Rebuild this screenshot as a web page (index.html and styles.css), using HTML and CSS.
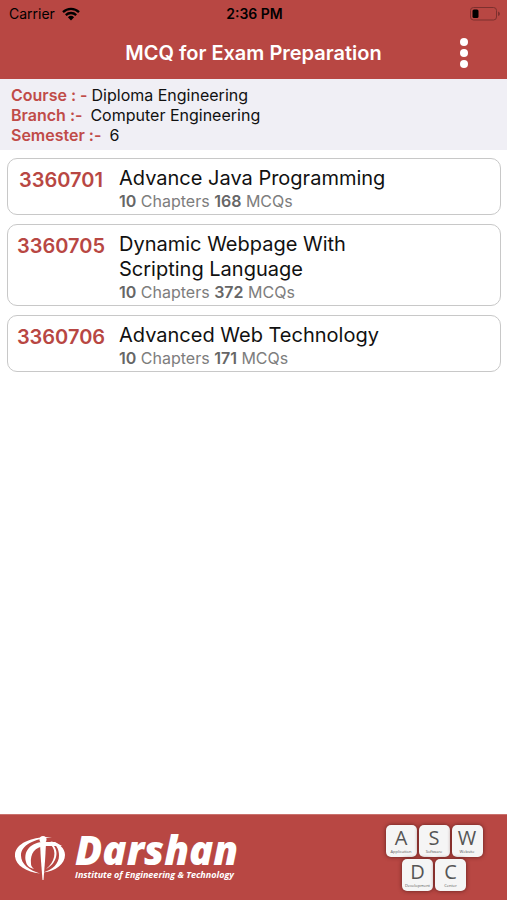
FILE: index.html
```html
<!DOCTYPE html>
<html lang="en">

<head>
    <meta charset="UTF-8">
    <meta name="viewport" content="width=device-width, initial-scale=1.0">
    <title>MCQ for Exam Preparation</title>
    <link rel="stylesheet" href="styles.css">
</head>

<body>
    <header class="app-header">
        <div class="status-bar">
            <div class="carrier">
                <span>Carrier</span>
                <svg class="wifi" viewBox="0 0 18 14" aria-hidden="true">
                    <path d="M1 5.2a11.5 11.5 0 0 1 16 0M3.8 8.1a7.5 7.5 0 0 1 10.4 0" fill="none" stroke="#000" stroke-width="2.3" />
                    <path d="M5.9 10.2a4.5 4.5 0 0 1 6.2 0L9 13.4z" />
                </svg>
            </div>
            <span class="time">2:36 PM</span>
            <svg class="battery" viewBox="0 0 30 14" aria-hidden="true">
                <rect x="0.5" y="0.5" width="26" height="12.5" rx="3" fill="none" stroke="#7d302e" />
                <rect x="2.5" y="2.5" width="6" height="8.5" rx="1.5" />
                <path d="M28 4.5q2 .7 2 2.3t-2 2.3z" fill="#7d302e" />
            </svg>
        </div>
        <div class="title-bar">
            <h1>MCQ for Exam Preparation</h1>
            <button type="button" class="menu-button" aria-label="Menu">
                <svg viewBox="0 0 8 30" aria-hidden="true">
                    <circle cx="4" cy="4" r="4" />
                    <circle cx="4" cy="15" r="4" />
                    <circle cx="4" cy="26" r="4" />
                </svg>
            </button>
        </div>
    </header>

    <dl class="course-info">
        <div><dt>Course : -</dt><dd>Diploma Engineering</dd></div>
        <div><dt>Branch :-</dt><dd class="spaced">Computer Engineering</dd></div>
        <div><dt>Semester :-</dt><dd class="spaced">6</dd></div>
    </dl>

    <main class="subject-list">
        <a href="#3360701" class="subject">
            <span class="code">3360701</span>
            <div class="details">
                <h2>Advance Java Programming</h2>
                <p><strong>10</strong> Chapters <strong>168</strong> MCQs</p>
            </div>
        </a>
        <a href="#3360705" class="subject">
            <span class="code">3360705</span>
            <div class="details">
                <h2>Dynamic Webpage With Scripting Language</h2>
                <p><strong>10</strong> Chapters <strong>372</strong> MCQs</p>
            </div>
        </a>
        <a href="#3360706" class="subject">
            <span class="code">3360706</span>
            <div class="details">
                <h2>Advanced Web Technology</h2>
                <p><strong>10</strong> Chapters <strong>171</strong> MCQs</p>
            </div>
        </a>
    </main>

    <footer class="app-footer">
        <div class="darshan">
            <svg class="emblem" viewBox="0 0 52 44" aria-hidden="true">
                <path d="M37 1C18 0 1 7 0 18c-1 10 10 18 25 19.500C14 34 6 28 6 19.500 6 9 19 3 37 1z" />
                <path d="M35 5c9 2 15 7 15 14 0 9-9 16-22 17.500 10-3 16-9 16-17C44 13 41 8 35 5z" />
                <path d="M11 26C8 14 17 6 29 6h11l7 4H30C20 11 15 17 16 28c0 2 1 3 3 5-4-1-7-3-8-7z" />
                <path d="M36 9c6 6 4 17-5 24 10-5 14-17 7-24z" />
                <circle cx="28" cy="3.500" r="3.500" />
                <path d="M25 8h6l-1 17-1.500 19h-1L26 25z" />
            </svg>
            <div class="wordmark">
                <strong>Darshan</strong>
                <span>Institute of Engineering &amp; Technology</span>
            </div>
        </div>
        <div class="aswdc">
            <div class="key"><b>A</b><small>Application</small></div>
            <div class="key"><b>S</b><small>Software</small></div>
            <div class="key"><b>W</b><small>Website</small></div>
            <div class="key"><b>D</b><small>Development</small></div>
            <div class="key"><b>C</b><small>Center</small></div>
        </div>
    </footer>
</body>

</html>
```

FILE: styles.css
```css
* {
    box-sizing: border-box;
}

body {
    font-family: Inter, "Liberation Sans", sans-serif;
    background-color: #fff;
    color: #111;
    margin: 0;
    min-height: 100vh;
    display: flex;
    flex-direction: column;
}

h1,
h2,
p,
dl,
dd {
    margin: 0;
}

.app-header,
.app-footer {
    background-color: #b84743;
}

.status-bar {
    display: grid;
    grid-template-columns: 1fr auto 1fr;
    align-items: center;
    height: 27px;
    padding: 0 7px 0 9px;
    color: #000;
    font-size: 14px;
}

.carrier {
    display: flex;
    align-items: center;
    gap: 7px;
}

.wifi {
    width: 18px;
    height: 14px;
}

.time {
    font-weight: 600;
}

.battery {
    width: 30px;
    height: 14px;
    justify-self: end;
}

.title-bar {
    display: grid;
    grid-template-columns: 1fr auto 1fr;
    align-items: center;
    height: 52px;
    padding: 0 32px;
}

h1 {
    grid-column: 2;
    color: #fff;
    font-size: 20px;
    font-weight: 600;
}

.menu-button {
    justify-self: end;
    height: 44px;
    padding: 7px;
    border: none;
    background: none;
    cursor: pointer;
}

.menu-button svg {
    display: block;
    width: 8px;
    height: 30px;
    fill: #fff;
}

.course-info {
    padding: 6px 11px 5px;
    background-color: #f0eff5;
    font-size: 16px;
    line-height: 20px;
}

.course-info div {
    display: flex;
    gap: 4px;
}

.course-info dt {
    color: #c04b48;
    font-weight: 600;
}

.course-info .spaced {
    margin-left: 4px;
}

.subject-list {
    flex: 1;
    display: flex;
    flex-direction: column;
    gap: 9px;
    padding: 8px 6px 8px 7px;
}

.subject {
    display: flex;
    padding: 7px 8px 3px;
    border: 1px solid #c8c8c8;
    border-radius: 10px;
    color: #111;
    text-decoration: none;
}

.code {
    width: 90px;
    margin-right: 13px;
    flex-shrink: 0;
    color: #b84743;
    font-size: 20px;
    font-weight: 600;
    line-height: 28px;
    text-align: center;
}

.details {
    max-width: 270px;
}

.details h2 {
    font-size: 20px;
    font-weight: 400;
    line-height: 25px;
}

.details p {
    color: #7d7d7d;
    font-size: 16px;
    line-height: 20px;
}

.details strong {
    color: #666;
    font-weight: 600;
}

.app-footer {
    display: flex;
    justify-content: space-between;
    align-items: center;
    height: 86px;
    padding: 0 24px 0 15px;
    border-top: 1px solid #c9716d;
}

.darshan {
    display: flex;
    align-items: center;
    gap: 8px;
    color: #fff;
}

.emblem {
    width: 52px;
    height: 44px;
    fill: #fff;
}

.wordmark {
    display: flex;
    flex-direction: column;
    padding-bottom: 4px;
    font-family: "Open Sans", "Liberation Sans", sans-serif;
    font-style: italic;
    white-space: nowrap;
}

.wordmark strong {
    font-size: 40px;
    font-weight: 800;
    line-height: 38px;
}

.wordmark span {
    font-size: 9px;
    font-weight: 700;
    line-height: 12px;
}

.aswdc {
    display: flex;
    flex-wrap: wrap;
    justify-content: center;
    gap: 2px;
    width: 98px;
}

.key {
    display: flex;
    flex-direction: column;
    align-items: center;
    width: 31px;
    height: 32px;
    border-radius: 5px;
    background-color: #f5f5f5;
    box-shadow: 0 0 4px #61201e;
    color: #555;
    font-family: "Open Sans", "Liberation Sans", sans-serif;
}

.key b {
    font-size: 20px;
    font-weight: 400;
    line-height: 25px;
}

.key small {
    font-size: 4px;
    line-height: 4px;
}
```
